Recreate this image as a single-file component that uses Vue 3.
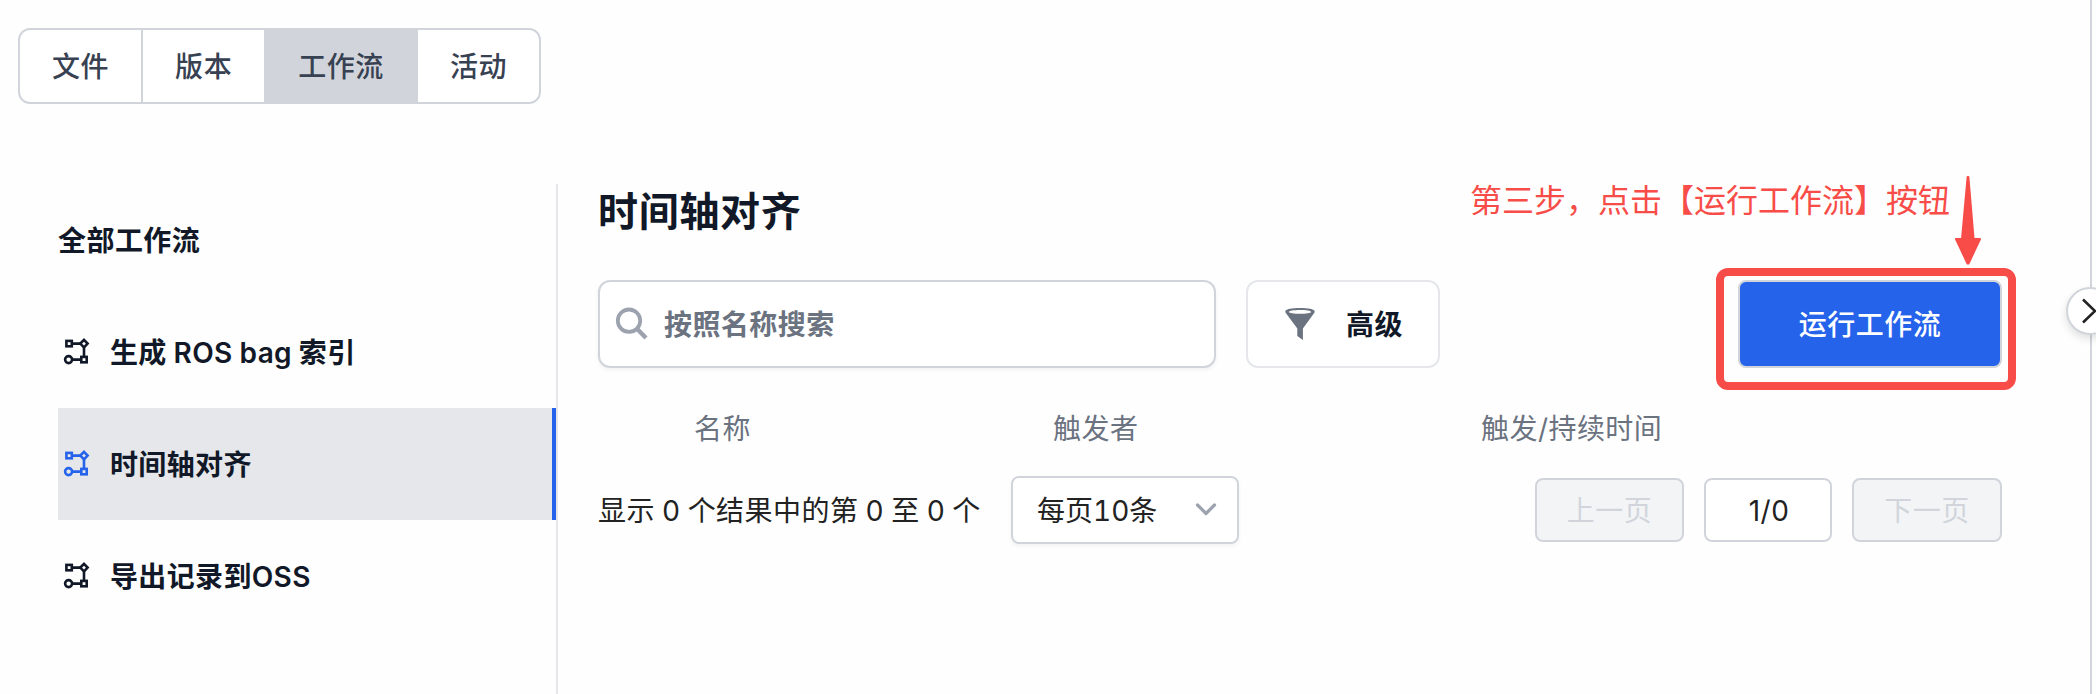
<script setup>
const tabs = ['文件', '版本', '工作流', '活动']
const activeTab = '工作流'
const flows = ['生成 ROS bag 索引', '时间轴对齐', '导出记录到OSS']
const activeFlow = '时间轴对齐'
</script>

<template>
  <div class="page">
    <nav class="tabs">
      <button v-for="t in tabs" :key="t" class="tab" :class="{ active: t === activeTab }">{{ t }}</button>
    </nav>

    <div class="body">
      <aside class="side">
        <div class="side-title">全部工作流</div>
        <div v-for="f in flows" :key="f" class="flow" :class="{ active: f === activeFlow }">
          <svg class="flow-icon" width="28" height="28" viewBox="0 0 28 28" fill="none" stroke="currentColor" stroke-width="2.6">
            <rect x="3.4" y="2.9" width="5.4" height="5.4" />
            <path d="M21 1.9 24.6 5.6 21 9.3 17.3 5.6Z" />
            <circle cx="5.6" cy="21.6" r="3.5" />
            <rect x="18.3" y="18.9" width="5.4" height="5.4" />
            <path d="M9 5.6h8.4M21 9.2v9.6M9.2 21.6h9" />
          </svg>
          <span>{{ f }}</span>
        </div>
      </aside>

      <main class="main">
        <h1>时间轴对齐</h1>
        <div class="toolbar">
          <div class="search">
            <svg width="34" height="34" viewBox="0 0 34 34" fill="none" stroke="#9ca3af">
              <circle cx="14" cy="13.7" r="11.2" stroke-width="3.8" />
              <path d="M22 21.7 31 31" stroke-width="4.4" />
            </svg>
            <span>按照名称搜索</span>
          </div>
          <button class="advanced">
            <svg width="30" height="34" viewBox="0 0 30 34">
              <path fill="#6b7280" fill-rule="evenodd" d="M15 1C23 1 29.7 2.2 29.7 4.4Q29.6 5.4 29 6.3L17.9 21.5V33L12.3 29V21.5L1 6.3Q.4 5.4.3 4.4C.3 2.2 7 1 15 1ZM15 3.1C9 3.1 4 3.8 4 4.9S9 6.8 15 6.8 26 6 26 4.9 21 3.1 15 3.1Z" />
            </svg>
            <span>高级</span>
          </button>
          <button class="run">运行工作流<i class="mark"></i></button>
        </div>

        <div class="thead">
          <span>名称</span><span>触发者</span><span>触发/持续时间</span>
        </div>

        <div class="footer">
          <span class="summary">显示 0 个结果中的第 0 至 0 个</span>
          <div class="select">
            <span>每页10条</span>
            <svg width="24" height="18" viewBox="0 0 24 18" fill="none" stroke="#9ca3af" stroke-width="3.2" stroke-linecap="round" stroke-linejoin="round">
              <path d="M3.5 4 12 12.5 20.5 4" />
            </svg>
          </div>
          <div class="pager">
            <button class="pg off prev">上一页</button>
            <span class="pg cur">1/0</span>
            <button class="pg off next">下一页</button>
          </div>
        </div>
      </main>
    </div>

    <div class="note">第三步，点击【运行工作流】按钮</div>
    <svg class="arrow" width="30" height="92" viewBox="0 0 30 92" fill="#f74c47" stroke="#f74c47" stroke-width="2" stroke-linejoin="round">
      <path d="M14.6 3h.8L20.6 65H27L15.5 89.5h-1L3 65H9Z" />
    </svg>
    <div class="edge"></div>
    <div class="toggle">
      <svg width="16" height="28" viewBox="0 0 16 28" fill="none" stroke="#222" stroke-width="2.6"><path d="M1 2.5 13 14 1 25.5" /></svg>
    </div>
  </div>
</template>

<style>
html, body { margin: 0; background: #fefefe; }
</style>

<style scoped>
* { box-sizing: border-box; }
.page {
  position: relative;
  width: 2096px;
  height: 694px;
  overflow: hidden;
  background: #fefefe;
  padding: 28px 0 0 18px;
  font-family: Inter, "Noto Sans CJK SC", sans-serif;
  font-size: 28px;
  line-height: 40px;
  letter-spacing: 0.45px;
  color: #111827;
}
button { font: inherit; letter-spacing: inherit; margin: 0; color: inherit; background: #fff; }
.tabs { display: flex; height: 76px; }
.tab {
  border: 2px solid #d1d5db;
  padding: 2px 32px 0;
  margin-right: -2px;
  font-weight: 500;
  color: #374151;
  letter-spacing: 0.55px;
}
.tab:first-child { border-radius: 12px 0 0 12px; }
.tab:last-child { border-radius: 0 12px 12px 0; }
.tab.active { background: #d1d5db; }
.body { display: flex; margin: 80px 0 0 40px; height: 510px; }
.side { width: 500px; border-right: 2px solid #e5e7eb; font-weight: 600; }
.side-title, .flow { height: 112px; display: flex; align-items: center; }
.side-title { padding-top: 2px; }
.flow { padding-left: 5px; }
.flow span { margin-left: 19px; padding-top: 1px; word-spacing: -0.5px; letter-spacing: 0.35px; }
.flow.active { background: #e5e7eb; border-right: 4px solid #2563eb; }
.flow.active .flow-icon { color: #2563eb; }
.main { width: 1404px; margin-left: 40px; }
h1 { margin: 0; padding-top: 6px; font-size: 40px; line-height: 44px; font-weight: 700; letter-spacing: 0.7px; }
.toolbar { display: flex; height: 88px; margin-top: 46px; }
.search {
  width: 618px; display: flex; align-items: center; gap: 15px; padding-left: 15px;
  background: #fff; border: 2px solid #d1d5db; border-radius: 12px;
  box-shadow: 0 2px 4px rgba(0, 0, 0, 0.05); font-weight: 600; color: #6b7280;
}
.search span, .advanced span { padding-top: 2px; }
.advanced {
  width: 194px; margin-left: 30px; padding: 0 0 0 37px; display: flex; align-items: center; gap: 31px;
  border: 2px solid #e5e7eb; border-radius: 12px; font-weight: 600;
}
.run {
  position: relative; width: 264px; margin-left: auto; border: 2px solid #d1d5db; border-radius: 8px;
  background: #2563eb; color: #fff; font-weight: 500; padding: 2px 0 0;
}
.mark { position: absolute; left: -24px; top: -14px; width: 300px; height: 122px; border: 8px solid #f74c47; border-radius: 12px; }
.thead { display: grid; grid-template-columns: 359px 428px 1fr; padding-left: 96px; margin-top: 41px; color: #6b7280; }
.footer { display: flex; align-items: center; margin-top: 27px; height: 68px; color: #222; }
.summary { width: 413px; padding-top: 2px; white-space: nowrap; word-spacing: -1px; }
.select {
  width: 228px; height: 68px; display: flex; align-items: center; justify-content: space-between; padding: 0 19px 0 24px;
  border: 2px solid #d1d5db; border-radius: 8px; background: #fff; box-shadow: 0 2px 4px rgba(0, 0, 0, 0.05);
  font-variant-numeric: tabular-nums; letter-spacing: 0;
}
.select span { padding-top: 1px; }
.pager { display: flex; gap: 20px; margin-left: auto; }
.pg { height: 64px; padding: 1px 0 0; border: 2px solid #d1d5db; border-radius: 8px; text-align: center; line-height: 60px; background: #fff; }
.pg.off { background: #f3f4f6; color: #d1d5db; }
.prev { width: 149px; }
.cur { width: 128px; padding-left: 2px; }
.next { width: 150px; }
.note { position: absolute; left: 1470px; top: 179px; font-size: 32px; line-height: 44px; letter-spacing: 0; color: #f74c47; white-space: nowrap; }
.arrow { position: absolute; left: 1953px; top: 174px; }
.edge { position: absolute; left: 2090px; top: 0; width: 2px; height: 694px; background: #d1d5db; }
.toggle {
  position: absolute; left: 2066px; top: 287px; width: 48px; height: 48px; border-radius: 50%;
  border: 2px solid #d1d5db; background: #fff; box-shadow: 0 4px 8px rgba(0, 0, 0, 0.12);
  display: flex; align-items: center; padding-left: 14px;
}
.toggle svg { flex: none; }
</style>
